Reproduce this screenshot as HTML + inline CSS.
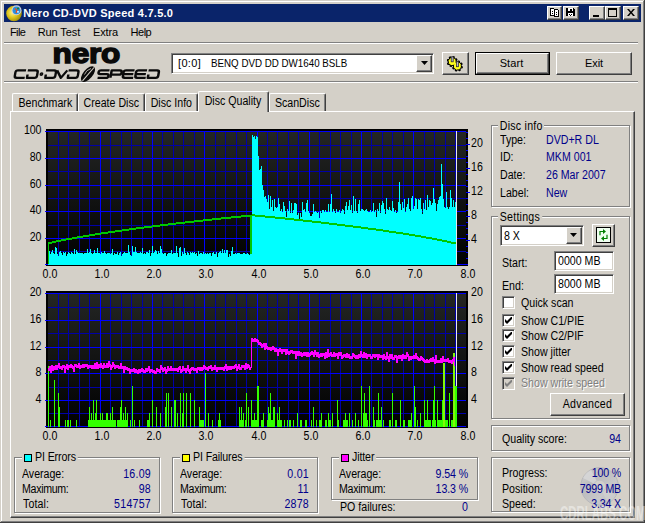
<!DOCTYPE html>
<html><head><meta charset="utf-8"><style>
html,body{margin:0;padding:0;}
body{width:645px;height:523px;overflow:hidden;background:#D4D0C8;position:relative;font-family:"Liberation Sans",sans-serif;font-size:11px;color:#000;}
.a{position:absolute;white-space:nowrap;line-height:14px;letter-spacing:-0.2px;}
.t{position:absolute;white-space:nowrap;line-height:14px;font-size:11px;}
.v{color:#00008B;}
.s{font-size:12px;line-height:15.34px;transform:scaleX(0.885);transform-origin:0 0;letter-spacing:0;}
.s.r{transform-origin:100% 0;}
.s.c{transform-origin:50% 0;}
.tab span{display:inline-block;font-size:12px;line-height:15.34px;transform:scaleX(0.885);transform-origin:50% 0;letter-spacing:0}
.r{text-align:right;}
.btn{position:absolute;box-sizing:border-box;background:#D4D0C8;border:1px solid;border-color:#fff #404040 #404040 #fff;box-shadow:inset -1px -1px 0 #808080, inset 1px 1px 0 #D4D0C8;}
.sunk{position:absolute;box-sizing:border-box;background:#fff;border:1px solid;border-color:#808080 #fff #fff #808080;box-shadow:inset 1px 1px 0 #404040, inset -1px -1px 0 #D4D0C8;}
.grp{position:absolute;box-sizing:border-box;border:1px solid #808080;box-shadow:1px 1px 0 #fff, inset 1px 1px 0 #fff;}
.gl{position:absolute;background:#D4D0C8;white-space:nowrap;line-height:14px;padding:0 2px;letter-spacing:-0.2px;}
.sw{position:absolute;width:6px;height:6px;border:1px solid #000;}
.hl{position:absolute;height:1px;}
.vl{position:absolute;width:1px;}
.cb{position:absolute;width:13px;height:13px;box-sizing:border-box;background:#fff;border:1px solid;border-color:#808080 #fff #fff #808080;box-shadow:inset 1px 1px 0 #404040, inset -1px -1px 0 #D4D0C8;}
.tab{position:absolute;box-sizing:border-box;border-top:1px solid #fff;border-left:1px solid #fff;border-right:1px solid #404040;border-radius:2px 2px 0 0;box-shadow:inset -1px 0 0 #808080;background:#D4D0C8;text-align:center;line-height:14px;}
</style></head><body><div class="hl" style="left:1px;top:1px;width:642px;background:#fff"></div>
<div class="vl" style="left:1px;top:1px;height:520px;background:#fff"></div>
<div class="vl" style="left:644px;top:0;height:523px;background:#404040"></div>
<div class="vl" style="left:643px;top:1px;height:521px;background:#808080"></div>
<div class="hl" style="left:0;top:522px;width:645px;background:#404040"></div>
<div class="hl" style="left:1px;top:521px;width:643px;background:#808080"></div>
<div class="a" style="left:4px;top:4px;width:637px;height:18px;background:#0A246A"></div>
<svg class="a" style="left:5px;top:4px" width="18" height="18" viewBox="0 0 18 18">
<defs><radialGradient id="gd" cx="0.4" cy="0.45" r="0.6"><stop offset="0" stop-color="#FFF490"/><stop offset="0.5" stop-color="#E0C820"/><stop offset="1" stop-color="#A08C08"/></radialGradient></defs>
<circle cx="9" cy="9.5" r="7.8" fill="url(#gd)"/>
<circle cx="11.5" cy="6.3" r="5" fill="#D0D0D8"/>
<circle cx="11.5" cy="6.3" r="3.9" fill="#2890E0"/>
<path d="M10 4.5 L12 6.5 L11 9" stroke="#E05020" stroke-width="1.3" fill="none"/>
<circle cx="13" cy="4.5" r="1" fill="#208020"/><circle cx="13" cy="7.8" r="0.9" fill="#fff"/>
</svg>
<div class="a" id="title" style="left:23.3px;top:6px;font-size:11px;font-weight:bold;color:#fff;letter-spacing:0.25px;">Nero CD-DVD Speed 4.7.5.0</div>
<div class="btn" style="left:547px;top:6px;width:15px;height:14px;"><svg style="position:absolute;left:-1px;top:-1px" width="16" height="14" shape-rendering="crispEdges"><rect x="3" y="2" width="5" height="8" fill="#000"/><rect x="4" y="3" width="3" height="6" fill="#fff"/><rect x="5" y="5" width="1" height="1" fill="#000"/><rect x="5" y="7" width="1" height="1" fill="#000"/><rect x="7" y="2" width="1" height="1" fill="#D4D0C8"/><rect x="7" y="3" width="5" height="8" fill="#000"/><rect x="8" y="4" width="3" height="6" fill="#fff"/><rect x="9" y="6" width="1" height="1" fill="#000"/><rect x="9" y="8" width="1" height="1" fill="#000"/><rect x="11" y="3" width="1" height="1" fill="#D4D0C8"/></svg></div>
<div class="btn" style="left:563px;top:6px;width:16px;height:14px;"><svg style="position:absolute;left:-1px;top:-1px" width="16" height="14" shape-rendering="crispEdges"><rect x="3" y="2" width="9" height="8" fill="#000"/><rect x="5" y="2" width="5" height="3" fill="#fff"/><rect x="7" y="3" width="2" height="2" fill="#000"/><rect x="5" y="7" width="5" height="3" fill="#fff"/><rect x="6" y="8" width="1" height="1" fill="#000"/><rect x="8" y="8" width="1" height="1" fill="#000"/><rect x="7" y="9" width="1" height="1" fill="#000"/><rect x="11" y="2" width="1" height="1" fill="#D4D0C8"/></svg></div>
<div class="btn" style="left:589px;top:6px;width:16px;height:14px;"><div style="position:absolute;left:3px;top:8px;width:6px;height:2px;background:#000"></div></div>
<div class="btn" style="left:605px;top:6px;width:16px;height:14px;"><div style="position:absolute;left:2px;top:1px;width:9px;height:9px;box-sizing:border-box;border:1px solid #000;border-top:2px solid #000"></div></div>
<div class="btn" style="left:623px;top:6px;width:16px;height:14px;"><svg style="position:absolute;left:3px;top:2px" width="8" height="7" viewBox="0 0 8 7"><path d="M0 0h2l2 2.5 2-2.5h2l-3 3.5 3 3.5h-2l-2-2.5-2 2.5h-2l3-3.5z" fill="#000"/></svg></div>
<div class="t menu" style="left:10px;top:25px;letter-spacing:-0.6px">File</div>
<div class="t menu" style="left:37.7px;top:25px;letter-spacing:-0.1px">Run Test</div>
<div class="t menu" style="left:93px;top:25px;letter-spacing:-0.12px">Extra</div>
<div class="t menu" style="left:130.6px;top:25px;letter-spacing:-0.5px">Help</div>
<div class="hl" style="left:4px;top:42px;width:634px;background:#808080"></div>
<div class="hl" style="left:4px;top:43px;width:634px;background:#fff"></div>
<div class="hl" style="left:4px;top:81px;width:634px;background:#808080"></div>
<div class="hl" style="left:4px;top:82px;width:634px;background:#fff"></div>
<svg class="a" style="left:0;top:0" width="170" height="84" viewBox="0 0 170 84">
<text x="52.6" y="62.8" font-family="Liberation Sans" font-weight="bold" font-size="28.5" textLength="67.6" lengthAdjust="spacingAndGlyphs" fill="#0a0a0a" stroke="#0a0a0a" stroke-width="1.5">nero</text>
<g transform="translate(13,0) skewX(-10)" fill="none" stroke="#0a0a0a" stroke-width="2.35" stroke-linejoin="round"><path transform="translate(15.2,70.3) scale(1.02,1)" d="M10,0 H2 Q0,0 0,2 V5.5 Q0,7.5 2,7.5 H10"/><path transform="translate(27.2,70.3) scale(1.02,1)" d="M0,0 H8 Q10,0 10,2 V5.5 Q10,7.5 8,7.5 H0.5 V4.2"/><path transform="translate(45.5,70.3) scale(1.02,1)" d="M0,0 H8 Q10,0 10,2 V5.5 Q10,7.5 8,7.5 H0.5 V4.2"/><path transform="translate(56.5,70.3) scale(1.02,1)" d="M0,0 L5,7.5 L10,0"/><path transform="translate(68,70.3) scale(1.02,1)" d="M0,0 H8 Q10,0 10,2 V5.5 Q10,7.5 8,7.5 H0.5 V4.2"/><path transform="translate(98.3,70.3) scale(1.06,1)" d="M10,0 H2 Q0,0 0,1.9 Q0,3.75 2,3.75 H8 Q10,3.75 10,5.6 Q10,7.5 8,7.5 H0"/><path transform="translate(110.8,70.3) scale(1.06,1)" d="M0.3,7.5 V0 H8 Q10,0 10,2.1 Q10,4.3 8,4.3 H0.5"/><path transform="translate(123.3,70.3) scale(1.06,1)" d="M10,0 H2 Q0,0 0,2 V5.5 Q0,7.5 2,7.5 H10 M1,3.75 H9.5"/><path transform="translate(135.8,70.3) scale(1.06,1)" d="M10,0 H2 Q0,0 0,2 V5.5 Q0,7.5 2,7.5 H10 M1,3.75 H9.5"/><path transform="translate(148.0,70.3) scale(1.06,1)" d="M0,0 H8 Q10,0 10,2 V5.5 Q10,7.5 8,7.5 H0.5 V4.2"/><circle cx="41.5" cy="74" r="0.7" fill="#111"/></g>
<ellipse cx="88" cy="74.1" rx="4.7" ry="9.4" transform="rotate(40 88 74.1)" fill="#0a0a0a"/>
<path d="M82.5 80.8 L94 67.5" stroke="#D4D0C8" stroke-width="1.1"/><path d="M84.5 74.5 Q86 70 91 68.5" stroke="#D4D0C8" stroke-width="0.8" fill="none"/>
</svg>
<div class="sunk" style="left:171px;top:53px;width:263px;height:21px;"></div>
<div class="t" style="left:178px;top:56px;letter-spacing:0.35px;">[0:0]</div>
<div class="t" id="drive" style="left:210.5px;top:56px;transform-origin:0 0;transform:scaleX(0.888)">BENQ DVD DD DW1640 BSLB</div>
<div class="btn" style="left:416px;top:55px;width:16px;height:17px;"><svg style="position:absolute;left:4px;top:5px" width="7" height="4"><path d="M0 0h7l-3.5 4z" fill="#000"/></svg></div>
<div class="btn" style="left:442px;top:52px;width:27px;height:23px;"><svg style="position:absolute;left:4px;top:3px" width="18" height="17" viewBox="0 0 18 17">
<g fill="#F4F400" stroke="#000" stroke-width="1.3" stroke-linejoin="round"><path d="M10.10 6.59 L9.81 7.53 L8.10 7.56 L7.67 8.08 L7.96 9.77 L7.10 10.23 L5.87 9.04 L5.19 9.10 L4.21 10.50 L3.27 10.21 L3.24 8.50 L2.72 8.07 L1.03 8.36 L0.57 7.50 L1.76 6.27 L1.70 5.59 L0.30 4.61 L0.59 3.67 L2.30 3.64 L2.73 3.12 L2.44 1.43 L3.30 0.97 L4.53 2.16 L5.21 2.10 L6.19 0.70 L7.13 0.99 L7.16 2.70 L7.68 3.13 L9.37 2.84 L9.83 3.70 L8.64 4.93 L8.70 5.61Z"/><path d="M15.30 10.99 L15.01 11.93 L13.30 11.96 L12.87 12.48 L13.16 14.17 L12.30 14.63 L11.07 13.44 L10.39 13.50 L9.41 14.90 L8.47 14.61 L8.44 12.90 L7.92 12.47 L6.23 12.76 L5.77 11.90 L6.96 10.67 L6.90 9.99 L5.50 9.01 L5.79 8.07 L7.50 8.04 L7.93 7.52 L7.64 5.83 L8.50 5.37 L9.73 6.56 L10.41 6.50 L11.39 5.10 L12.33 5.39 L12.36 7.10 L12.88 7.53 L14.57 7.24 L15.03 8.10 L13.84 9.33 L13.90 10.01Z"/></g>
<g fill="#FFFF20"><circle cx="5.2" cy="5.6" r="3.4"/><circle cx="10.4" cy="10" r="3.4"/></g>
<rect x="4.2" y="0.8" width="2" height="5" fill="#B8B8D0" stroke="#303030" stroke-width="0.8"/>
<rect x="9.4" y="5.7" width="2" height="5" fill="#B8B8D0" stroke="#303030" stroke-width="0.8"/>
</svg></div>
<div class="a" style="left:475px;top:52px;width:75px;height:23px;background:#000"></div>
<div class="btn" style="left:476px;top:53px;width:73px;height:21px;"></div>
<div class="t" style="left:474px;top:56px;width:75px;text-align:center;letter-spacing:0.1px">Start</div>
<div class="btn" style="left:556px;top:52px;width:76px;height:23px;"></div>
<div class="t" style="left:556px;top:56px;width:76px;text-align:center;letter-spacing:-0.1px">Exit</div>
<div class="a" style="left:10px;top:111px;width:625px;height:407px;box-sizing:border-box;border:1px solid;border-color:#fff #404040 #404040 #fff;box-shadow:inset -1px -1px 0 #808080;"></div>
<div class="tab" style="left:12px;top:93px;width:66px;height:18px;padding-top:2.3px;"><span>Benchmark</span></div>
<div class="tab" style="left:78px;top:93px;width:67px;height:18px;padding-top:2.3px;"><span>Create Disc</span></div>
<div class="tab" style="left:145px;top:93px;width:53px;height:18px;padding-top:2.3px;"><span>Disc Info</span></div>
<div class="tab" style="left:198px;top:91px;width:71px;height:21px;padding-top:2.3px;"><span>Disc Quality</span></div>
<div class="tab" style="left:269px;top:93px;width:57px;height:18px;padding-top:2.3px;"><span>ScanDisc</span></div>
<svg class="a" style="left:0;top:0" width="645" height="523" viewBox="0 0 645 523" shape-rendering="crispEdges"><defs><linearGradient id="cg" x1="0" y1="0" x2="0" y2="1"><stop offset="0" stop-color="#242624"/><stop offset="1" stop-color="#000000"/></linearGradient></defs>
<rect x="46" y="129" width="422" height="137" fill="#000" />
<rect x="48" y="131" width="418" height="134" fill="url(#cg)" />
<rect x="58" y="131" width="1" height="134" fill="#0000A8" />
<rect x="68" y="131" width="1" height="134" fill="#0000A8" />
<rect x="79" y="131" width="1" height="134" fill="#0000A8" />
<rect x="89" y="131" width="1" height="134" fill="#0000A8" />
<rect x="100" y="131" width="1" height="134" fill="#0000FF" />
<rect x="110" y="131" width="1" height="134" fill="#0000A8" />
<rect x="121" y="131" width="1" height="134" fill="#0000A8" />
<rect x="131" y="131" width="1" height="134" fill="#0000A8" />
<rect x="142" y="131" width="1" height="134" fill="#0000A8" />
<rect x="152" y="131" width="1" height="134" fill="#0000FF" />
<rect x="162" y="131" width="1" height="134" fill="#0000A8" />
<rect x="173" y="131" width="1" height="134" fill="#0000A8" />
<rect x="183" y="131" width="1" height="134" fill="#0000A8" />
<rect x="194" y="131" width="1" height="134" fill="#0000A8" />
<rect x="204" y="131" width="1" height="134" fill="#0000FF" />
<rect x="215" y="131" width="1" height="134" fill="#0000A8" />
<rect x="225" y="131" width="1" height="134" fill="#0000A8" />
<rect x="236" y="131" width="1" height="134" fill="#0000A8" />
<rect x="246" y="131" width="1" height="134" fill="#0000A8" />
<rect x="257" y="131" width="1" height="134" fill="#0000FF" />
<rect x="267" y="131" width="1" height="134" fill="#0000A8" />
<rect x="277" y="131" width="1" height="134" fill="#0000A8" />
<rect x="288" y="131" width="1" height="134" fill="#0000A8" />
<rect x="298" y="131" width="1" height="134" fill="#0000A8" />
<rect x="309" y="131" width="1" height="134" fill="#0000FF" />
<rect x="319" y="131" width="1" height="134" fill="#0000A8" />
<rect x="330" y="131" width="1" height="134" fill="#0000A8" />
<rect x="340" y="131" width="1" height="134" fill="#0000A8" />
<rect x="351" y="131" width="1" height="134" fill="#0000A8" />
<rect x="361" y="131" width="1" height="134" fill="#0000FF" />
<rect x="371" y="131" width="1" height="134" fill="#0000A8" />
<rect x="382" y="131" width="1" height="134" fill="#0000A8" />
<rect x="392" y="131" width="1" height="134" fill="#0000A8" />
<rect x="403" y="131" width="1" height="134" fill="#0000A8" />
<rect x="413" y="131" width="1" height="134" fill="#0000FF" />
<rect x="424" y="131" width="1" height="134" fill="#0000A8" />
<rect x="434" y="131" width="1" height="134" fill="#0000A8" />
<rect x="445" y="131" width="1" height="134" fill="#0000A8" />
<rect x="455" y="131" width="1" height="134" fill="#0000A8" />
<rect x="45" y="131" width="421" height="1" fill="#0000FF" />
<rect x="48" y="145" width="418" height="1" fill="#0000A8" />
<rect x="45" y="158" width="421" height="1" fill="#0000FF" />
<rect x="48" y="171" width="418" height="1" fill="#0000A8" />
<rect x="45" y="185" width="421" height="1" fill="#0000FF" />
<rect x="48" y="198" width="418" height="1" fill="#0000A8" />
<rect x="45" y="211" width="421" height="1" fill="#0000FF" />
<rect x="48" y="225" width="418" height="1" fill="#0000A8" />
<rect x="45" y="238" width="421" height="1" fill="#0000FF" />
<rect x="48" y="251" width="418" height="1" fill="#0000A8" />
<rect x="45" y="264" width="421" height="1" fill="#0000FF" />
<rect x="100" y="131" width="1" height="134" fill="#0000FF" />
<rect x="152" y="131" width="1" height="134" fill="#0000FF" />
<rect x="204" y="131" width="1" height="134" fill="#0000FF" />
<rect x="257" y="131" width="1" height="134" fill="#0000FF" />
<rect x="309" y="131" width="1" height="134" fill="#0000FF" />
<rect x="361" y="131" width="1" height="134" fill="#0000FF" />
<rect x="413" y="131" width="1" height="134" fill="#0000FF" />
<rect x="46" y="291" width="422" height="137" fill="#000" />
<rect x="48" y="293" width="418" height="134" fill="url(#cg)" />
<rect x="58" y="293" width="1" height="134" fill="#0000A8" />
<rect x="68" y="293" width="1" height="134" fill="#0000A8" />
<rect x="79" y="293" width="1" height="134" fill="#0000A8" />
<rect x="89" y="293" width="1" height="134" fill="#0000A8" />
<rect x="100" y="293" width="1" height="134" fill="#0000FF" />
<rect x="110" y="293" width="1" height="134" fill="#0000A8" />
<rect x="121" y="293" width="1" height="134" fill="#0000A8" />
<rect x="131" y="293" width="1" height="134" fill="#0000A8" />
<rect x="142" y="293" width="1" height="134" fill="#0000A8" />
<rect x="152" y="293" width="1" height="134" fill="#0000FF" />
<rect x="162" y="293" width="1" height="134" fill="#0000A8" />
<rect x="173" y="293" width="1" height="134" fill="#0000A8" />
<rect x="183" y="293" width="1" height="134" fill="#0000A8" />
<rect x="194" y="293" width="1" height="134" fill="#0000A8" />
<rect x="204" y="293" width="1" height="134" fill="#0000FF" />
<rect x="215" y="293" width="1" height="134" fill="#0000A8" />
<rect x="225" y="293" width="1" height="134" fill="#0000A8" />
<rect x="236" y="293" width="1" height="134" fill="#0000A8" />
<rect x="246" y="293" width="1" height="134" fill="#0000A8" />
<rect x="257" y="293" width="1" height="134" fill="#0000FF" />
<rect x="267" y="293" width="1" height="134" fill="#0000A8" />
<rect x="277" y="293" width="1" height="134" fill="#0000A8" />
<rect x="288" y="293" width="1" height="134" fill="#0000A8" />
<rect x="298" y="293" width="1" height="134" fill="#0000A8" />
<rect x="309" y="293" width="1" height="134" fill="#0000FF" />
<rect x="319" y="293" width="1" height="134" fill="#0000A8" />
<rect x="330" y="293" width="1" height="134" fill="#0000A8" />
<rect x="340" y="293" width="1" height="134" fill="#0000A8" />
<rect x="351" y="293" width="1" height="134" fill="#0000A8" />
<rect x="361" y="293" width="1" height="134" fill="#0000FF" />
<rect x="371" y="293" width="1" height="134" fill="#0000A8" />
<rect x="382" y="293" width="1" height="134" fill="#0000A8" />
<rect x="392" y="293" width="1" height="134" fill="#0000A8" />
<rect x="403" y="293" width="1" height="134" fill="#0000A8" />
<rect x="413" y="293" width="1" height="134" fill="#0000FF" />
<rect x="424" y="293" width="1" height="134" fill="#0000A8" />
<rect x="434" y="293" width="1" height="134" fill="#0000A8" />
<rect x="445" y="293" width="1" height="134" fill="#0000A8" />
<rect x="455" y="293" width="1" height="134" fill="#0000A8" />
<rect x="45" y="293" width="421" height="1" fill="#0000FF" />
<rect x="48" y="307" width="418" height="1" fill="#0000A8" />
<rect x="45" y="320" width="421" height="1" fill="#0000FF" />
<rect x="48" y="333" width="418" height="1" fill="#0000A8" />
<rect x="45" y="347" width="421" height="1" fill="#0000FF" />
<rect x="48" y="360" width="418" height="1" fill="#0000A8" />
<rect x="45" y="373" width="421" height="1" fill="#0000FF" />
<rect x="48" y="387" width="418" height="1" fill="#0000A8" />
<rect x="45" y="400" width="421" height="1" fill="#0000FF" />
<rect x="48" y="413" width="418" height="1" fill="#0000A8" />
<rect x="45" y="426" width="421" height="1" fill="#0000FF" />
<rect x="100" y="293" width="1" height="134" fill="#0000FF" />
<rect x="152" y="293" width="1" height="134" fill="#0000FF" />
<rect x="204" y="293" width="1" height="134" fill="#0000FF" />
<rect x="257" y="293" width="1" height="134" fill="#0000FF" />
<rect x="309" y="293" width="1" height="134" fill="#0000FF" />
<rect x="361" y="293" width="1" height="134" fill="#0000FF" />
<rect x="413" y="293" width="1" height="134" fill="#0000FF" />
<path d="M48 265V250h1V251h1V254h1V252h1V250h1V253h1V254h1V247h1V248h1V254h1V256h1V252h1V251h1V253h1V255h1V252h1V253h1V252h1V256h1V254h1V252h1V253h1V254h1V252h1V253h1V254h1V249h1V254h1V250h1V252h1V253h1V253h1V253h1V253h1V253h1V254h1V253h1V253h1V253h1V249h1V253h1V252h1V249h1V253h1V254h1V253h1V250h1V253h1V253h1V248h1V253h1V253h1V254h1V252h1V253h1V253h1V251h1V253h1V254h1V253h1V253h1V253h1V254h1V253h1V249h1V255h1V253h1V254h1V254h1V252h1V255h1V253h1V252h1V256h1V254h1V253h1V252h1V253h1V253h1V253h1V245h1V252h1V255h1V256h1V246h1V252h1V252h1V247h1V252h1V253h1V253h1V253h1V252h1V253h1V248h1V254h1V253h1V254h1V252h1V252h1V253h1V250h1V256h1V253h1V246h1V253h1V252h1V250h1V251h1V254h1V251h1V253h1V246h1V249h1V253h1V254h1V253h1V253h1V256h1V254h1V253h1V253h1V253h1V250h1V254h1V253h1V253h1V253h1V246h1V253h1V257h1V248h1V247h1V256h1V252h1V254h1V248h1V253h1V255h1V252h1V253h1V255h1V252h1V253h1V252h1V253h1V252h1V254h1V253h1V256h1V251h1V254h1V253h1V253h1V254h1V252h1V254h1V253h1V254h1V253h1V254h1V253h1V253h1V256h1V253h1V252h1V254h1V254h1V252h1V257h1V253h1V252h1V251h1V253h1V249h1V253h1V250h1V253h1V250h1V250h1V257h1V254h1V256h1V251h1V247h1V254h1V254h1V253h1V254h1V253h1V253h1V253h1V254h1V254h1V254h1V253h1V253h1V254h1V254h1V253h1V254h1V255h1V248h1V254h1V135h1V137h1V136h1V139h1V136h1V137h1V156h1V170h1V169h1V166h1V185h1V190h1V197h1V196h1V199h1V202h1V195h1V209h1V196h1V207h1V200h1V211h1V199h1V207h1V208h1V207h1V198h1V204h1V211h1V209h1V212h1V202h1V206h1V211h1V217h1V209h1V211h1V201h1V213h1V203h1V213h1V210h1V203h1V203h1V204h1V215h1V213h1V219h1V213h1V217h1V202h1V210h1V209h1V212h1V203h1V200h1V211h1V213h1V216h1V216h1V214h1V204h1V212h1V211h1V212h1V213h1V212h1V218h1V211h1V213h1V210h1V210h1V212h1V210h1V212h1V212h1V204h1V212h1V204h1V194h1V212h1V209h1V211h1V213h1V209h1V212h1V212h1V210h1V213h1V211h1V209h1V210h1V214h1V206h1V202h1V210h1V206h1V200h1V210h1V205h1V213h1V196h1V211h1V199h1V211h1V213h1V204h1V200h1V211h1V209h1V209h1V210h1V211h1V210h1V209h1V211h1V212h1V212h1V210h1V212h1V211h1V203h1V212h1V210h1V217h1V209h1V211h1V203h1V213h1V205h1V201h1V203h1V209h1V214h1V198h1V209h1V210h1V207h1V210h1V211h1V201h1V208h1V212h1V210h1V213h1V212h1V202h1V182h1V204h1V210h1V202h1V208h1V199h1V212h1V207h1V204h1V198h1V209h1V211h1V198h1V196h1V209h1V206h1V198h1V199h1V209h1V199h1V200h1V198h1V209h1V214h1V203h1V209h1V200h1V210h1V195h1V207h1V200h1V201h1V205h1V203h1V188h1V199h1V203h1V211h1V204h1V200h1V197h1V196h1V164h1V184h1V199h1V207h1V208h1V192h1V207h1V209h1V207h1V190h1V198h1V207h1V200h1V207h1V202h1V265Z" fill="#00FFFF"/>
<path d="M48 243h1v21h-1zM48 242h1v2h-1zM49 242h1v2h-1zM50 242h1v2h-1zM51 242h1v2h-1zM52 241h1v2h-1zM53 241h1v2h-1zM54 241h1v2h-1zM55 241h1v2h-1zM56 240h1v2h-1zM57 240h1v2h-1zM58 240h1v2h-1zM59 240h1v2h-1zM60 240h1v2h-1zM61 239h1v2h-1zM62 239h1v2h-1zM63 239h1v2h-1zM64 239h1v2h-1zM65 239h1v2h-1zM66 238h1v2h-1zM67 238h1v2h-1zM68 238h1v2h-1zM69 238h1v2h-1zM70 238h1v2h-1zM71 238h1v2h-1zM72 237h1v2h-1zM73 237h1v2h-1zM74 237h1v2h-1zM75 237h1v2h-1zM76 237h1v2h-1zM77 236h1v2h-1zM78 236h1v2h-1zM79 236h1v2h-1zM80 236h1v2h-1zM81 236h1v2h-1zM82 236h1v2h-1zM83 235h1v2h-1zM84 235h1v2h-1zM85 235h1v2h-1zM86 235h1v2h-1zM87 235h1v2h-1zM88 235h1v2h-1zM89 234h1v2h-1zM90 234h1v2h-1zM91 234h1v2h-1zM92 234h1v2h-1zM93 234h1v2h-1zM94 234h1v2h-1zM95 233h1v2h-1zM96 233h1v2h-1zM97 233h1v2h-1zM98 233h1v2h-1zM99 233h1v2h-1zM100 233h1v2h-1zM101 232h1v2h-1zM102 232h1v2h-1zM103 232h1v2h-1zM104 232h1v2h-1zM105 232h1v2h-1zM106 232h1v2h-1zM107 232h1v2h-1zM108 231h1v2h-1zM109 231h1v2h-1zM110 231h1v2h-1zM111 231h1v2h-1zM112 231h1v2h-1zM113 231h1v2h-1zM114 231h1v2h-1zM115 230h1v2h-1zM116 230h1v2h-1zM117 230h1v2h-1zM118 230h1v2h-1zM119 230h1v2h-1zM120 230h1v2h-1zM121 230h1v2h-1zM122 229h1v2h-1zM123 229h1v2h-1zM124 229h1v2h-1zM125 229h1v2h-1zM126 229h1v2h-1zM127 229h1v2h-1zM128 229h1v2h-1zM129 228h1v2h-1zM130 228h1v2h-1zM131 228h1v2h-1zM132 228h1v2h-1zM133 228h1v2h-1zM134 228h1v2h-1zM135 228h1v2h-1zM136 227h1v2h-1zM137 227h1v2h-1zM138 227h1v2h-1zM139 227h1v2h-1zM140 227h1v2h-1zM141 227h1v2h-1zM142 227h1v2h-1zM143 227h1v2h-1zM144 226h1v2h-1zM145 226h1v2h-1zM146 226h1v2h-1zM147 226h1v2h-1zM148 226h1v2h-1zM149 226h1v2h-1zM150 226h1v2h-1zM151 226h1v2h-1zM152 225h1v2h-1zM153 225h1v2h-1zM154 225h1v2h-1zM155 225h1v2h-1zM156 225h1v2h-1zM157 225h1v2h-1zM158 225h1v2h-1zM159 225h1v2h-1zM160 224h1v2h-1zM161 224h1v2h-1zM162 224h1v2h-1zM163 224h1v2h-1zM164 224h1v2h-1zM165 224h1v2h-1zM166 224h1v2h-1zM167 224h1v2h-1zM168 223h1v2h-1zM169 223h1v2h-1zM170 223h1v2h-1zM171 223h1v2h-1zM172 223h1v2h-1zM173 223h1v2h-1zM174 223h1v2h-1zM175 223h1v2h-1zM176 222h1v2h-1zM177 222h1v2h-1zM178 222h1v2h-1zM179 222h1v2h-1zM180 222h1v2h-1zM181 222h1v2h-1zM182 222h1v2h-1zM183 222h1v2h-1zM184 222h1v2h-1zM185 221h1v2h-1zM186 221h1v2h-1zM187 221h1v2h-1zM188 221h1v2h-1zM189 221h1v2h-1zM190 221h1v2h-1zM191 221h1v2h-1zM192 221h1v2h-1zM193 221h1v2h-1zM194 220h1v2h-1zM195 220h1v2h-1zM196 220h1v2h-1zM197 220h1v2h-1zM198 220h1v2h-1zM199 220h1v2h-1zM200 220h1v2h-1zM201 220h1v2h-1zM202 220h1v2h-1zM203 219h1v2h-1zM204 219h1v2h-1zM205 219h1v2h-1zM206 219h1v2h-1zM207 219h1v2h-1zM208 219h1v2h-1zM209 219h1v2h-1zM210 219h1v2h-1zM211 219h1v2h-1zM212 218h1v2h-1zM213 218h1v2h-1zM214 218h1v2h-1zM215 218h1v2h-1zM216 218h1v2h-1zM217 218h1v2h-1zM218 218h1v2h-1zM219 218h1v2h-1zM220 218h1v2h-1zM221 217h1v2h-1zM222 217h1v2h-1zM223 217h1v2h-1zM224 217h1v2h-1zM225 217h1v2h-1zM226 217h1v2h-1zM227 217h1v2h-1zM228 217h1v2h-1zM229 217h1v2h-1zM230 217h1v2h-1zM231 216h1v2h-1zM232 216h1v2h-1zM233 216h1v2h-1zM234 216h1v2h-1zM235 216h1v2h-1zM236 216h1v2h-1zM237 216h1v2h-1zM238 216h1v2h-1zM239 216h1v2h-1zM240 216h1v2h-1zM241 215h1v2h-1zM242 215h1v2h-1zM243 215h1v2h-1zM244 215h1v2h-1zM245 215h1v2h-1zM246 215h1v2h-1zM247 215h1v2h-1zM248 215h1v2h-1zM249 215h1v2h-1zM250 215h1v2h-1zM250 215h2v39h-2zM252 214h1v2h-1zM253 214h1v2h-1zM254 214h1v2h-1zM255 215h1v2h-1zM256 215h1v2h-1zM257 215h1v2h-1zM258 215h1v2h-1zM259 215h1v2h-1zM260 215h1v2h-1zM261 215h1v2h-1zM262 215h1v2h-1zM263 215h1v2h-1zM264 215h1v2h-1zM265 216h1v2h-1zM266 216h1v2h-1zM267 216h1v2h-1zM268 216h1v2h-1zM269 216h1v2h-1zM270 216h1v2h-1zM271 216h1v2h-1zM272 216h1v2h-1zM273 216h1v2h-1zM274 216h1v2h-1zM275 217h1v2h-1zM276 217h1v2h-1zM277 217h1v2h-1zM278 217h1v2h-1zM279 217h1v2h-1zM280 217h1v2h-1zM281 217h1v2h-1zM282 217h1v2h-1zM283 217h1v2h-1zM284 217h1v2h-1zM285 218h1v2h-1zM286 218h1v2h-1zM287 218h1v2h-1zM288 218h1v2h-1zM289 218h1v2h-1zM290 218h1v2h-1zM291 218h1v2h-1zM292 218h1v2h-1zM293 218h1v2h-1zM294 219h1v2h-1zM295 219h1v2h-1zM296 219h1v2h-1zM297 219h1v2h-1zM298 219h1v2h-1zM299 219h1v2h-1zM300 219h1v2h-1zM301 219h1v2h-1zM302 219h1v2h-1zM303 220h1v2h-1zM304 220h1v2h-1zM305 220h1v2h-1zM306 220h1v2h-1zM307 220h1v2h-1zM308 220h1v2h-1zM309 220h1v2h-1zM310 220h1v2h-1zM311 220h1v2h-1zM312 221h1v2h-1zM313 221h1v2h-1zM314 221h1v2h-1zM315 221h1v2h-1zM316 221h1v2h-1zM317 221h1v2h-1zM318 221h1v2h-1zM319 221h1v2h-1zM320 221h1v2h-1zM321 222h1v2h-1zM322 222h1v2h-1zM323 222h1v2h-1zM324 222h1v2h-1zM325 222h1v2h-1zM326 222h1v2h-1zM327 222h1v2h-1zM328 222h1v2h-1zM329 223h1v2h-1zM330 223h1v2h-1zM331 223h1v2h-1zM332 223h1v2h-1zM333 223h1v2h-1zM334 223h1v2h-1zM335 223h1v2h-1zM336 223h1v2h-1zM337 224h1v2h-1zM338 224h1v2h-1zM339 224h1v2h-1zM340 224h1v2h-1zM341 224h1v2h-1zM342 224h1v2h-1zM343 224h1v2h-1zM344 224h1v2h-1zM345 225h1v2h-1zM346 225h1v2h-1zM347 225h1v2h-1zM348 225h1v2h-1zM349 225h1v2h-1zM350 225h1v2h-1zM351 225h1v2h-1zM352 225h1v2h-1zM353 226h1v2h-1zM354 226h1v2h-1zM355 226h1v2h-1zM356 226h1v2h-1zM357 226h1v2h-1zM358 226h1v2h-1zM359 226h1v2h-1zM360 226h1v2h-1zM361 227h1v2h-1zM362 227h1v2h-1zM363 227h1v2h-1zM364 227h1v2h-1zM365 227h1v2h-1zM366 227h1v2h-1zM367 227h1v2h-1zM368 228h1v2h-1zM369 228h1v2h-1zM370 228h1v2h-1zM371 228h1v2h-1zM372 228h1v2h-1zM373 228h1v2h-1zM374 228h1v2h-1zM375 228h1v2h-1zM376 229h1v2h-1zM377 229h1v2h-1zM378 229h1v2h-1zM379 229h1v2h-1zM380 229h1v2h-1zM381 229h1v2h-1zM382 229h1v2h-1zM383 230h1v2h-1zM384 230h1v2h-1zM385 230h1v2h-1zM386 230h1v2h-1zM387 230h1v2h-1zM388 230h1v2h-1zM389 231h1v2h-1zM390 231h1v2h-1zM391 231h1v2h-1zM392 231h1v2h-1zM393 231h1v2h-1zM394 231h1v2h-1zM395 231h1v2h-1zM396 232h1v2h-1zM397 232h1v2h-1zM398 232h1v2h-1zM399 232h1v2h-1zM400 232h1v2h-1zM401 232h1v2h-1zM402 232h1v2h-1zM403 233h1v2h-1zM404 233h1v2h-1zM405 233h1v2h-1zM406 233h1v2h-1zM407 233h1v2h-1zM408 233h1v2h-1zM409 234h1v2h-1zM410 234h1v2h-1zM411 234h1v2h-1zM412 234h1v2h-1zM413 234h1v2h-1zM414 234h1v2h-1zM415 235h1v2h-1zM416 235h1v2h-1zM417 235h1v2h-1zM418 235h1v2h-1zM419 235h1v2h-1zM420 235h1v2h-1zM421 236h1v2h-1zM422 236h1v2h-1zM423 236h1v2h-1zM424 236h1v2h-1zM425 236h1v2h-1zM426 237h1v2h-1zM427 237h1v2h-1zM428 237h1v2h-1zM429 237h1v2h-1zM430 237h1v2h-1zM431 237h1v2h-1zM432 238h1v2h-1zM433 238h1v2h-1zM434 238h1v2h-1zM435 238h1v2h-1zM436 238h1v2h-1zM437 239h1v2h-1zM438 239h1v2h-1zM439 239h1v2h-1zM440 239h1v2h-1zM441 239h1v2h-1zM442 240h1v2h-1zM443 240h1v2h-1zM444 240h1v2h-1zM445 240h1v2h-1zM446 240h1v2h-1zM447 241h1v2h-1zM448 241h1v2h-1zM449 241h1v2h-1zM450 241h1v2h-1zM451 242h1v2h-1zM452 242h1v2h-1zM453 242h1v2h-1zM454 242h1v2h-1zM455 242h1v2h-1z" fill="#00C800"/>
<rect x="466" y="264" width="2" height="1" fill="#0000FF" />
<rect x="466" y="258" width="2" height="1" fill="#0000FF" />
<rect x="466" y="252" width="2" height="1" fill="#0000FF" />
<rect x="466" y="246" width="2" height="1" fill="#0000FF" />
<rect x="466" y="240" width="4" height="1" fill="#0000FF" />
<rect x="466" y="234" width="2" height="1" fill="#0000FF" />
<rect x="466" y="228" width="2" height="1" fill="#0000FF" />
<rect x="466" y="222" width="2" height="1" fill="#0000FF" />
<rect x="466" y="216" width="4" height="1" fill="#0000FF" />
<rect x="466" y="210" width="2" height="1" fill="#0000FF" />
<rect x="466" y="204" width="2" height="1" fill="#0000FF" />
<rect x="466" y="198" width="2" height="1" fill="#0000FF" />
<rect x="466" y="192" width="4" height="1" fill="#0000FF" />
<rect x="466" y="186" width="2" height="1" fill="#0000FF" />
<rect x="466" y="180" width="2" height="1" fill="#0000FF" />
<rect x="466" y="174" width="2" height="1" fill="#0000FF" />
<rect x="466" y="168" width="4" height="1" fill="#0000FF" />
<rect x="466" y="162" width="2" height="1" fill="#0000FF" />
<rect x="466" y="156" width="2" height="1" fill="#0000FF" />
<rect x="466" y="150" width="2" height="1" fill="#0000FF" />
<rect x="466" y="144" width="4" height="1" fill="#0000FF" />
<rect x="466" y="138" width="2" height="1" fill="#0000FF" />
<rect x="466" y="132" width="2" height="1" fill="#0000FF" />
<rect x="456" y="131" width="1" height="133.5" fill="#E8E8E8" />
<rect x="456" y="293" width="1" height="133.5" fill="#E8E8E8" />
<rect x="48" y="366.4" width="1" height="60.6" fill="#33FF00"/>
<rect x="50" y="419.8" width="1" height="7.2" fill="#33FF00"/>
<rect x="54" y="379.8" width="1" height="47.2" fill="#33FF00"/>
<rect x="58" y="393.1" width="1" height="33.9" fill="#33FF00"/>
<rect x="59" y="406.5" width="1" height="20.5" fill="#33FF00"/>
<rect x="65" y="419.8" width="1" height="7.2" fill="#33FF00"/>
<rect x="67" y="419.8" width="1" height="7.2" fill="#33FF00"/>
<rect x="68" y="419.8" width="1" height="7.2" fill="#33FF00"/>
<rect x="70" y="419.8" width="1" height="7.2" fill="#33FF00"/>
<rect x="76" y="419.8" width="1" height="7.2" fill="#33FF00"/>
<rect x="88" y="419.8" width="1" height="7.2" fill="#33FF00"/>
<rect x="89" y="406.5" width="1" height="20.5" fill="#33FF00"/>
<rect x="90" y="419.8" width="1" height="7.2" fill="#33FF00"/>
<rect x="91" y="413.1" width="1" height="13.8" fill="#33FF00"/>
<rect x="92" y="419.8" width="1" height="7.2" fill="#33FF00"/>
<rect x="93" y="399.8" width="1" height="27.2" fill="#33FF00"/>
<rect x="94" y="419.8" width="1" height="7.2" fill="#33FF00"/>
<rect x="95" y="413.1" width="1" height="13.8" fill="#33FF00"/>
<rect x="96" y="399.8" width="1" height="27.2" fill="#33FF00"/>
<rect x="97" y="419.8" width="1" height="7.2" fill="#33FF00"/>
<rect x="98" y="419.8" width="1" height="7.2" fill="#33FF00"/>
<rect x="99" y="419.8" width="1" height="7.2" fill="#33FF00"/>
<rect x="100" y="413.1" width="1" height="13.8" fill="#33FF00"/>
<rect x="101" y="419.8" width="1" height="7.2" fill="#33FF00"/>
<rect x="102" y="413.1" width="1" height="13.8" fill="#33FF00"/>
<rect x="103" y="419.8" width="1" height="7.2" fill="#33FF00"/>
<rect x="104" y="419.8" width="1" height="7.2" fill="#33FF00"/>
<rect x="105" y="419.8" width="1" height="7.2" fill="#33FF00"/>
<rect x="106" y="413.1" width="1" height="13.8" fill="#33FF00"/>
<rect x="107" y="413.1" width="1" height="13.8" fill="#33FF00"/>
<rect x="108" y="419.8" width="1" height="7.2" fill="#33FF00"/>
<rect x="109" y="419.8" width="1" height="7.2" fill="#33FF00"/>
<rect x="110" y="413.1" width="1" height="13.8" fill="#33FF00"/>
<rect x="111" y="419.8" width="1" height="7.2" fill="#33FF00"/>
<rect x="112" y="406.5" width="1" height="20.5" fill="#33FF00"/>
<rect x="113" y="419.8" width="1" height="7.2" fill="#33FF00"/>
<rect x="114" y="419.8" width="1" height="7.2" fill="#33FF00"/>
<rect x="115" y="419.8" width="1" height="7.2" fill="#33FF00"/>
<rect x="117" y="419.8" width="1" height="7.2" fill="#33FF00"/>
<rect x="118" y="419.8" width="1" height="7.2" fill="#33FF00"/>
<rect x="119" y="419.8" width="1" height="7.2" fill="#33FF00"/>
<rect x="120" y="406.5" width="1" height="20.5" fill="#33FF00"/>
<rect x="121" y="399.8" width="1" height="27.2" fill="#33FF00"/>
<rect x="122" y="419.8" width="1" height="7.2" fill="#33FF00"/>
<rect x="123" y="413.1" width="1" height="13.8" fill="#33FF00"/>
<rect x="124" y="419.8" width="1" height="7.2" fill="#33FF00"/>
<rect x="125" y="406.5" width="1" height="20.5" fill="#33FF00"/>
<rect x="126" y="419.8" width="1" height="7.2" fill="#33FF00"/>
<rect x="127" y="413.1" width="1" height="13.8" fill="#33FF00"/>
<rect x="130" y="419.8" width="1" height="7.2" fill="#33FF00"/>
<rect x="132" y="386.4" width="1" height="40.5" fill="#33FF00"/>
<rect x="134" y="419.8" width="1" height="7.2" fill="#33FF00"/>
<rect x="139" y="419.8" width="1" height="7.2" fill="#33FF00"/>
<rect x="147" y="419.8" width="1" height="7.2" fill="#33FF00"/>
<rect x="148" y="419.8" width="1" height="7.2" fill="#33FF00"/>
<rect x="149" y="413.1" width="1" height="13.8" fill="#33FF00"/>
<rect x="152" y="399.8" width="1" height="27.2" fill="#33FF00"/>
<rect x="156" y="406.5" width="1" height="20.5" fill="#33FF00"/>
<rect x="160" y="413.1" width="1" height="13.8" fill="#33FF00"/>
<rect x="165" y="406.5" width="1" height="20.5" fill="#33FF00"/>
<rect x="166" y="393.1" width="1" height="33.9" fill="#33FF00"/>
<rect x="168" y="393.1" width="1" height="33.9" fill="#33FF00"/>
<rect x="171" y="406.5" width="1" height="20.5" fill="#33FF00"/>
<rect x="174" y="399.8" width="1" height="27.2" fill="#33FF00"/>
<rect x="175" y="399.8" width="1" height="27.2" fill="#33FF00"/>
<rect x="177" y="413.1" width="1" height="13.8" fill="#33FF00"/>
<rect x="180" y="393.1" width="1" height="33.9" fill="#33FF00"/>
<rect x="182" y="413.1" width="1" height="13.8" fill="#33FF00"/>
<rect x="183" y="393.1" width="1" height="33.9" fill="#33FF00"/>
<rect x="186" y="393.1" width="1" height="33.9" fill="#33FF00"/>
<rect x="190" y="393.1" width="1" height="33.9" fill="#33FF00"/>
<rect x="194" y="399.8" width="1" height="27.2" fill="#33FF00"/>
<rect x="199" y="406.5" width="1" height="20.5" fill="#33FF00"/>
<rect x="200" y="419.8" width="1" height="7.2" fill="#33FF00"/>
<rect x="201" y="419.8" width="1" height="7.2" fill="#33FF00"/>
<rect x="202" y="419.8" width="1" height="7.2" fill="#33FF00"/>
<rect x="203" y="419.8" width="1" height="7.2" fill="#33FF00"/>
<rect x="205" y="373.1" width="1" height="53.9" fill="#33FF00"/>
<rect x="208" y="413.1" width="1" height="13.8" fill="#33FF00"/>
<rect x="212" y="419.8" width="1" height="7.2" fill="#33FF00"/>
<rect x="218" y="419.8" width="1" height="7.2" fill="#33FF00"/>
<rect x="219" y="413.1" width="1" height="13.8" fill="#33FF00"/>
<rect x="220" y="419.8" width="1" height="7.2" fill="#33FF00"/>
<rect x="239" y="406.5" width="1" height="20.5" fill="#33FF00"/>
<rect x="240" y="419.8" width="1" height="7.2" fill="#33FF00"/>
<rect x="241" y="406.5" width="1" height="20.5" fill="#33FF00"/>
<rect x="242" y="419.8" width="1" height="7.2" fill="#33FF00"/>
<rect x="243" y="413.1" width="1" height="13.8" fill="#33FF00"/>
<rect x="245" y="419.8" width="1" height="7.2" fill="#33FF00"/>
<rect x="246" y="393.1" width="1" height="33.9" fill="#33FF00"/>
<rect x="248" y="406.5" width="1" height="20.5" fill="#33FF00"/>
<rect x="251" y="399.8" width="1" height="27.2" fill="#33FF00"/>
<rect x="252" y="419.8" width="1" height="7.2" fill="#33FF00"/>
<rect x="253" y="419.8" width="1" height="7.2" fill="#33FF00"/>
<rect x="254" y="413.1" width="1" height="13.8" fill="#33FF00"/>
<rect x="255" y="419.8" width="1" height="7.2" fill="#33FF00"/>
<rect x="256" y="419.8" width="1" height="7.2" fill="#33FF00"/>
<rect x="257" y="386.4" width="1" height="40.5" fill="#33FF00"/>
<rect x="258" y="386.4" width="1" height="40.5" fill="#33FF00"/>
<rect x="261" y="419.8" width="1" height="7.2" fill="#33FF00"/>
<rect x="262" y="419.8" width="1" height="7.2" fill="#33FF00"/>
<rect x="263" y="413.1" width="1" height="13.8" fill="#33FF00"/>
<rect x="267" y="419.8" width="1" height="7.2" fill="#33FF00"/>
<rect x="268" y="406.5" width="1" height="20.5" fill="#33FF00"/>
<rect x="269" y="413.1" width="1" height="13.8" fill="#33FF00"/>
<rect x="270" y="393.1" width="1" height="33.9" fill="#33FF00"/>
<rect x="271" y="419.8" width="1" height="7.2" fill="#33FF00"/>
<rect x="272" y="419.8" width="1" height="7.2" fill="#33FF00"/>
<rect x="273" y="406.5" width="1" height="20.5" fill="#33FF00"/>
<rect x="274" y="406.5" width="1" height="20.5" fill="#33FF00"/>
<rect x="277" y="413.1" width="1" height="13.8" fill="#33FF00"/>
<rect x="278" y="419.8" width="1" height="7.2" fill="#33FF00"/>
<rect x="279" y="406.5" width="1" height="20.5" fill="#33FF00"/>
<rect x="280" y="419.8" width="1" height="7.2" fill="#33FF00"/>
<rect x="281" y="419.8" width="1" height="7.2" fill="#33FF00"/>
<rect x="284" y="419.8" width="1" height="7.2" fill="#33FF00"/>
<rect x="287" y="419.8" width="1" height="7.2" fill="#33FF00"/>
<rect x="289" y="419.8" width="1" height="7.2" fill="#33FF00"/>
<rect x="290" y="419.8" width="1" height="7.2" fill="#33FF00"/>
<rect x="293" y="419.8" width="1" height="7.2" fill="#33FF00"/>
<rect x="297" y="413.1" width="1" height="13.8" fill="#33FF00"/>
<rect x="300" y="419.8" width="1" height="7.2" fill="#33FF00"/>
<rect x="301" y="419.8" width="1" height="7.2" fill="#33FF00"/>
<rect x="305" y="419.8" width="1" height="7.2" fill="#33FF00"/>
<rect x="306" y="419.8" width="1" height="7.2" fill="#33FF00"/>
<rect x="311" y="419.8" width="1" height="7.2" fill="#33FF00"/>
<rect x="313" y="406.5" width="1" height="20.5" fill="#33FF00"/>
<rect x="316" y="419.8" width="1" height="7.2" fill="#33FF00"/>
<rect x="319" y="419.8" width="1" height="7.2" fill="#33FF00"/>
<rect x="320" y="419.8" width="1" height="7.2" fill="#33FF00"/>
<rect x="321" y="413.1" width="1" height="13.8" fill="#33FF00"/>
<rect x="325" y="419.8" width="1" height="7.2" fill="#33FF00"/>
<rect x="326" y="419.8" width="1" height="7.2" fill="#33FF00"/>
<rect x="328" y="413.1" width="1" height="13.8" fill="#33FF00"/>
<rect x="329" y="419.8" width="1" height="7.2" fill="#33FF00"/>
<rect x="330" y="419.8" width="1" height="7.2" fill="#33FF00"/>
<rect x="332" y="413.1" width="1" height="13.8" fill="#33FF00"/>
<rect x="337" y="399.8" width="1" height="27.2" fill="#33FF00"/>
<rect x="338" y="419.8" width="1" height="7.2" fill="#33FF00"/>
<rect x="343" y="419.8" width="1" height="7.2" fill="#33FF00"/>
<rect x="344" y="419.8" width="1" height="7.2" fill="#33FF00"/>
<rect x="345" y="413.1" width="1" height="13.8" fill="#33FF00"/>
<rect x="346" y="419.8" width="1" height="7.2" fill="#33FF00"/>
<rect x="347" y="419.8" width="1" height="7.2" fill="#33FF00"/>
<rect x="349" y="413.1" width="1" height="13.8" fill="#33FF00"/>
<rect x="352" y="419.8" width="1" height="7.2" fill="#33FF00"/>
<rect x="355" y="413.1" width="1" height="13.8" fill="#33FF00"/>
<rect x="358" y="419.8" width="1" height="7.2" fill="#33FF00"/>
<rect x="361" y="386.4" width="1" height="40.5" fill="#33FF00"/>
<rect x="363" y="413.1" width="1" height="13.8" fill="#33FF00"/>
<rect x="364" y="393.1" width="1" height="33.9" fill="#33FF00"/>
<rect x="365" y="413.1" width="1" height="13.8" fill="#33FF00"/>
<rect x="366" y="413.1" width="1" height="13.8" fill="#33FF00"/>
<rect x="367" y="419.8" width="1" height="7.2" fill="#33FF00"/>
<rect x="369" y="386.4" width="1" height="40.5" fill="#33FF00"/>
<rect x="373" y="406.5" width="1" height="20.5" fill="#33FF00"/>
<rect x="374" y="419.8" width="1" height="7.2" fill="#33FF00"/>
<rect x="376" y="419.8" width="1" height="7.2" fill="#33FF00"/>
<rect x="377" y="419.8" width="1" height="7.2" fill="#33FF00"/>
<rect x="378" y="393.1" width="1" height="33.9" fill="#33FF00"/>
<rect x="379" y="419.8" width="1" height="7.2" fill="#33FF00"/>
<rect x="380" y="419.8" width="1" height="7.2" fill="#33FF00"/>
<rect x="381" y="406.5" width="1" height="20.5" fill="#33FF00"/>
<rect x="383" y="419.8" width="1" height="7.2" fill="#33FF00"/>
<rect x="389" y="419.8" width="1" height="7.2" fill="#33FF00"/>
<rect x="390" y="419.8" width="1" height="7.2" fill="#33FF00"/>
<rect x="392" y="393.1" width="1" height="33.9" fill="#33FF00"/>
<rect x="395" y="419.8" width="1" height="7.2" fill="#33FF00"/>
<rect x="396" y="419.8" width="1" height="7.2" fill="#33FF00"/>
<rect x="400" y="399.8" width="1" height="27.2" fill="#33FF00"/>
<rect x="403" y="419.8" width="1" height="7.2" fill="#33FF00"/>
<rect x="404" y="419.8" width="1" height="7.2" fill="#33FF00"/>
<rect x="408" y="419.8" width="1" height="7.2" fill="#33FF00"/>
<rect x="409" y="419.8" width="1" height="7.2" fill="#33FF00"/>
<rect x="410" y="419.8" width="1" height="7.2" fill="#33FF00"/>
<rect x="411" y="413.1" width="1" height="13.8" fill="#33FF00"/>
<rect x="414" y="386.4" width="1" height="40.5" fill="#33FF00"/>
<rect x="415" y="406.5" width="1" height="20.5" fill="#33FF00"/>
<rect x="417" y="419.8" width="1" height="7.2" fill="#33FF00"/>
<rect x="420" y="413.1" width="1" height="13.8" fill="#33FF00"/>
<rect x="424" y="399.8" width="1" height="27.2" fill="#33FF00"/>
<rect x="425" y="419.8" width="1" height="7.2" fill="#33FF00"/>
<rect x="426" y="419.8" width="1" height="7.2" fill="#33FF00"/>
<rect x="427" y="399.8" width="1" height="27.2" fill="#33FF00"/>
<rect x="428" y="419.8" width="1" height="7.2" fill="#33FF00"/>
<rect x="429" y="419.8" width="1" height="7.2" fill="#33FF00"/>
<rect x="430" y="419.8" width="1" height="7.2" fill="#33FF00"/>
<rect x="432" y="419.8" width="1" height="7.2" fill="#33FF00"/>
<rect x="433" y="399.8" width="1" height="27.2" fill="#33FF00"/>
<rect x="434" y="386.4" width="1" height="40.5" fill="#33FF00"/>
<rect x="435" y="419.8" width="1" height="7.2" fill="#33FF00"/>
<rect x="437" y="399.8" width="1" height="27.2" fill="#33FF00"/>
<rect x="438" y="419.8" width="1" height="7.2" fill="#33FF00"/>
<rect x="439" y="419.8" width="1" height="7.2" fill="#33FF00"/>
<rect x="440" y="419.8" width="1" height="7.2" fill="#33FF00"/>
<rect x="441" y="419.8" width="1" height="7.2" fill="#33FF00"/>
<rect x="442" y="399.8" width="1" height="27.2" fill="#33FF00"/>
<rect x="443" y="419.8" width="1" height="7.2" fill="#33FF00"/>
<rect x="444" y="419.8" width="1" height="7.2" fill="#33FF00"/>
<rect x="445" y="419.8" width="1" height="7.2" fill="#33FF00"/>
<rect x="446" y="419.8" width="1" height="7.2" fill="#33FF00"/>
<rect x="447" y="419.8" width="1" height="7.2" fill="#33FF00"/>
<rect x="449" y="393.1" width="1" height="33.9" fill="#33FF00"/>
<rect x="451" y="419.8" width="1" height="7.2" fill="#33FF00"/>
<rect x="452" y="419.8" width="1" height="7.2" fill="#33FF00"/>
<rect x="453" y="419.8" width="1" height="7.2" fill="#33FF00"/>
<rect x="454" y="419.8" width="1" height="7.2" fill="#33FF00"/>
<rect x="455" y="386.4" width="1" height="40.5" fill="#33FF00"/>
<rect x="456" y="386.4" width="1" height="40.5" fill="#33FF00"/>
<rect x="443" y="362.5" width="2" height="64.5" fill="#80F808"/>
<rect x="453" y="353" width="1.5" height="74" fill="#80F808"/>
<path d="M48 368h1v3h-1zM49 366h1v5h-1zM50 366h1v7h-1zM51 365h1v8h-1zM52 365h1v6h-1zM53 366h1v5h-1zM54 366h1v4h-1zM55 365h1v5h-1zM56 365h1v5h-1zM57 365h1v5h-1zM58 363h1v5h-1zM59 363h1v6h-1zM60 366h1v3h-1zM61 366h1v4h-1zM62 365h1v5h-1zM63 365h1v3h-1zM64 365h1v8h-1zM65 366h1v7h-1zM66 364h1v5h-1zM67 364h1v6h-1zM68 365h1v5h-1zM69 365h1v3h-1zM70 364h1v4h-1zM71 364h1v4h-1zM72 365h1v4h-1zM73 366h1v6h-1zM74 364h1v8h-1zM75 364h1v3h-1zM76 364h1v4h-1zM77 365h1v3h-1zM78 363h1v5h-1zM79 363h1v6h-1zM80 365h1v4h-1zM81 365h1v3h-1zM82 364h1v4h-1zM83 364h1v4h-1zM84 364h1v4h-1zM85 364h1v3h-1zM86 364h1v3h-1zM87 364h1v5h-1zM88 365h1v4h-1zM89 365h1v3h-1zM90 365h1v3h-1zM91 365h1v4h-1zM92 365h1v4h-1zM93 365h1v4h-1zM94 363h1v6h-1zM95 363h1v6h-1zM96 362h1v7h-1zM97 362h1v7h-1zM98 364h1v5h-1zM99 364h1v4h-1zM100 363h1v5h-1zM101 363h1v5h-1zM102 365h1v4h-1zM103 363h1v6h-1zM104 363h1v5h-1zM105 365h1v3h-1zM106 363h1v5h-1zM107 363h1v5h-1zM108 361h1v7h-1zM109 361h1v6h-1zM110 364h1v6h-1zM111 365h1v5h-1zM112 362h1v6h-1zM113 362h1v5h-1zM114 364h1v5h-1zM115 365h1v4h-1zM116 365h1v3h-1zM117 365h1v3h-1zM118 365h1v4h-1zM119 366h1v3h-1zM120 363h1v6h-1zM121 363h1v6h-1zM122 366h1v3h-1zM123 366h1v7h-1zM124 366h1v7h-1zM125 366h1v4h-1zM126 367h1v3h-1zM127 367h1v4h-1zM128 368h1v3h-1zM129 368h1v6h-1zM130 369h1v5h-1zM131 369h1v3h-1zM132 369h1v3h-1zM133 368h1v4h-1zM134 368h1v5h-1zM135 369h1v4h-1zM136 369h1v4h-1zM137 370h1v4h-1zM138 369h1v5h-1zM139 369h1v4h-1zM140 369h1v4h-1zM141 368h1v4h-1zM142 368h1v4h-1zM143 369h1v4h-1zM144 370h1v3h-1zM145 368h1v5h-1zM146 368h1v4h-1zM147 368h1v4h-1zM148 366h1v5h-1zM149 366h1v7h-1zM150 369h1v4h-1zM151 369h1v3h-1zM152 369h1v4h-1zM153 370h1v3h-1zM154 370h1v4h-1zM155 371h1v3h-1zM156 368h1v6h-1zM157 368h1v4h-1zM158 369h1v3h-1zM159 369h1v4h-1zM160 365h1v8h-1zM161 365h1v5h-1zM162 367h1v5h-1zM163 368h1v4h-1zM164 367h1v4h-1zM165 367h1v7h-1zM166 369h1v5h-1zM167 366h1v6h-1zM168 366h1v5h-1zM169 368h1v3h-1zM170 366h1v5h-1zM171 366h1v5h-1zM172 368h1v3h-1zM173 368h1v3h-1zM174 368h1v3h-1zM175 368h1v3h-1zM176 368h1v3h-1zM177 368h1v4h-1zM178 367h1v5h-1zM179 366h1v4h-1zM180 366h1v7h-1zM181 369h1v4h-1zM182 366h1v6h-1zM183 366h1v5h-1zM184 368h1v3h-1zM185 368h1v5h-1zM186 368h1v5h-1zM187 365h1v6h-1zM188 365h1v7h-1zM189 369h1v5h-1zM190 368h1v6h-1zM191 367h1v4h-1zM192 367h1v3h-1zM193 367h1v4h-1zM194 368h1v3h-1zM195 368h1v3h-1zM196 368h1v5h-1zM197 367h1v6h-1zM198 367h1v3h-1zM199 367h1v4h-1zM200 367h1v4h-1zM201 367h1v4h-1zM202 367h1v4h-1zM203 365h1v5h-1zM204 365h1v4h-1zM205 366h1v4h-1zM206 367h1v3h-1zM207 367h1v4h-1zM208 366h1v5h-1zM209 366h1v3h-1zM210 365h1v4h-1zM211 365h1v6h-1zM212 367h1v4h-1zM213 367h1v3h-1zM214 365h1v5h-1zM215 365h1v5h-1zM216 367h1v5h-1zM217 367h1v5h-1zM218 367h1v3h-1zM219 367h1v3h-1zM220 367h1v3h-1zM221 367h1v3h-1zM222 367h1v3h-1zM223 367h1v4h-1zM224 366h1v5h-1zM225 364h1v5h-1zM226 364h1v7h-1zM227 366h1v5h-1zM228 366h1v4h-1zM229 366h1v4h-1zM230 366h1v4h-1zM231 366h1v4h-1zM232 366h1v3h-1zM233 366h1v3h-1zM234 365h1v4h-1zM235 364h1v4h-1zM236 364h1v7h-1zM237 366h1v5h-1zM238 364h1v5h-1zM239 364h1v6h-1zM240 367h1v3h-1zM241 365h1v5h-1zM242 365h1v3h-1zM243 365h1v3h-1zM244 365h1v5h-1zM245 363h1v7h-1zM246 363h1v6h-1zM247 364h1v5h-1zM248 364h1v4h-1zM249 365h1v5h-1zM250 367h1v3h-1zM251 338h1v30h-1zM252 338h1v4h-1zM253 339h1v3h-1zM254 338h1v4h-1zM255 338h1v4h-1zM256 339h1v3h-1zM257 339h1v4h-1zM258 340h1v5h-1zM259 342h1v3h-1zM260 342h1v4h-1zM261 343h1v5h-1zM262 344h1v4h-1zM263 343h1v4h-1zM264 343h1v7h-1zM265 343h1v7h-1zM266 343h1v6h-1zM267 346h1v4h-1zM268 347h1v3h-1zM269 347h1v3h-1zM270 347h1v4h-1zM271 347h1v4h-1zM272 346h1v4h-1zM273 346h1v4h-1zM274 347h1v5h-1zM275 348h1v4h-1zM276 348h1v4h-1zM277 349h1v7h-1zM278 349h1v7h-1zM279 348h1v4h-1zM280 348h1v4h-1zM281 349h1v5h-1zM282 349h1v5h-1zM283 349h1v3h-1zM284 349h1v3h-1zM285 349h1v6h-1zM286 349h1v6h-1zM287 349h1v5h-1zM288 351h1v4h-1zM289 351h1v4h-1zM290 350h1v4h-1zM291 350h1v3h-1zM292 350h1v4h-1zM293 351h1v3h-1zM294 351h1v3h-1zM295 351h1v8h-1zM296 351h1v8h-1zM297 351h1v5h-1zM298 351h1v5h-1zM299 351h1v5h-1zM300 352h1v4h-1zM301 352h1v5h-1zM302 353h1v4h-1zM303 352h1v4h-1zM304 352h1v4h-1zM305 352h1v4h-1zM306 352h1v5h-1zM307 352h1v5h-1zM308 352h1v5h-1zM309 353h1v4h-1zM310 352h1v4h-1zM311 351h1v4h-1zM312 351h1v4h-1zM313 352h1v5h-1zM314 350h1v7h-1zM315 350h1v5h-1zM316 352h1v5h-1zM317 352h1v5h-1zM318 352h1v6h-1zM319 354h1v4h-1zM320 353h1v4h-1zM321 353h1v4h-1zM322 353h1v4h-1zM323 353h1v3h-1zM324 353h1v6h-1zM325 352h1v7h-1zM326 352h1v6h-1zM327 349h1v9h-1zM328 349h1v8h-1zM329 353h1v4h-1zM330 352h1v4h-1zM331 352h1v5h-1zM332 354h1v3h-1zM333 352h1v5h-1zM334 352h1v5h-1zM335 353h1v4h-1zM336 353h1v3h-1zM337 353h1v6h-1zM338 352h1v7h-1zM339 352h1v4h-1zM340 352h1v4h-1zM341 352h1v7h-1zM342 355h1v4h-1zM343 354h1v4h-1zM344 354h1v3h-1zM345 354h1v4h-1zM346 353h1v5h-1zM347 353h1v5h-1zM348 354h1v4h-1zM349 354h1v5h-1zM350 356h1v3h-1zM351 356h1v3h-1zM352 353h1v6h-1zM353 353h1v4h-1zM354 354h1v4h-1zM355 355h1v4h-1zM356 355h1v4h-1zM357 355h1v4h-1zM358 354h1v5h-1zM359 354h1v4h-1zM360 351h1v7h-1zM361 351h1v6h-1zM362 354h1v4h-1zM363 352h1v6h-1zM364 352h1v6h-1zM365 353h1v5h-1zM366 353h1v6h-1zM367 354h1v5h-1zM368 354h1v3h-1zM369 354h1v3h-1zM370 354h1v5h-1zM371 356h1v3h-1zM372 354h1v5h-1zM373 354h1v3h-1zM374 354h1v4h-1zM375 354h1v4h-1zM376 354h1v3h-1zM377 354h1v6h-1zM378 354h1v6h-1zM379 354h1v4h-1zM380 355h1v3h-1zM381 355h1v3h-1zM382 355h1v5h-1zM383 354h1v6h-1zM384 354h1v5h-1zM385 356h1v4h-1zM386 352h1v8h-1zM387 352h1v7h-1zM388 356h1v6h-1zM389 354h1v8h-1zM390 354h1v5h-1zM391 354h1v5h-1zM392 354h1v6h-1zM393 357h1v3h-1zM394 355h1v5h-1zM395 355h1v3h-1zM396 355h1v8h-1zM397 356h1v7h-1zM398 355h1v4h-1zM399 355h1v4h-1zM400 355h1v4h-1zM401 355h1v6h-1zM402 354h1v7h-1zM403 354h1v5h-1zM404 355h1v4h-1zM405 355h1v4h-1zM406 352h1v7h-1zM407 352h1v5h-1zM408 354h1v7h-1zM409 356h1v5h-1zM410 356h1v4h-1zM411 356h1v4h-1zM412 356h1v3h-1zM413 355h1v4h-1zM414 355h1v4h-1zM415 353h1v6h-1zM416 353h1v6h-1zM417 356h1v4h-1zM418 357h1v4h-1zM419 358h1v3h-1zM420 356h1v5h-1zM421 356h1v4h-1zM422 357h1v4h-1zM423 358h1v4h-1zM424 359h1v4h-1zM425 360h1v3h-1zM426 359h1v4h-1zM427 359h1v4h-1zM428 360h1v3h-1zM429 359h1v4h-1zM430 358h1v4h-1zM431 358h1v4h-1zM432 357h1v5h-1zM433 357h1v5h-1zM434 359h1v5h-1zM435 355h1v9h-1zM436 355h1v8h-1zM437 360h1v3h-1zM438 360h1v3h-1zM439 360h1v3h-1zM440 358h1v5h-1zM441 358h1v5h-1zM442 356h1v7h-1zM443 356h1v6h-1zM444 359h1v3h-1zM445 359h1v3h-1zM446 359h1v3h-1zM447 358h1v4h-1zM448 358h1v5h-1zM449 360h1v3h-1zM450 360h1v3h-1zM451 360h1v4h-1zM452 359h1v5h-1zM453 357h1v5h-1zM454 357h1v9h-1z" fill="#FF00FF"/></svg>
<div class="a r s" style="left:10px;width:31.2px;top:122.5px;letter-spacing:-0.24px">100</div>
<div class="a r s" style="left:10px;width:31.2px;top:149.5px;letter-spacing:-0.24px">80</div>
<div class="a r s" style="left:10px;width:31.2px;top:176.5px;letter-spacing:-0.24px">60</div>
<div class="a r s" style="left:10px;width:31.2px;top:202.5px;letter-spacing:-0.24px">40</div>
<div class="a r s" style="left:10px;width:31.2px;top:229.5px;letter-spacing:-0.24px">20</div>
<div class="a r s" style="left:10px;width:31.2px;top:284.5px;letter-spacing:-0.24px">20</div>
<div class="a s" style="left:470.6px;top:284.5px">20</div>
<div class="a s" style="left:470.6px;top:136.0px">20</div>
<div class="a r s" style="left:10px;width:31.2px;top:311.5px;letter-spacing:-0.24px">16</div>
<div class="a s" style="left:470.6px;top:311.5px">16</div>
<div class="a s" style="left:470.6px;top:160.0px">16</div>
<div class="a r s" style="left:10px;width:31.2px;top:338.5px;letter-spacing:-0.24px">12</div>
<div class="a s" style="left:470.6px;top:338.5px">12</div>
<div class="a s" style="left:470.6px;top:184.0px">12</div>
<div class="a r s" style="left:10px;width:31.2px;top:364.5px;letter-spacing:-0.24px">8</div>
<div class="a s" style="left:470.6px;top:364.5px">8</div>
<div class="a s" style="left:470.6px;top:208.0px">8</div>
<div class="a r s" style="left:10px;width:31.2px;top:391.5px;letter-spacing:-0.24px">4</div>
<div class="a s" style="left:470.6px;top:391.5px">4</div>
<div class="a s" style="left:470.6px;top:232.0px">4</div>
<div class="a s c" style="left:39.7px;width:20px;text-align:center;top:267px">0.0</div>
<div class="a s c" style="left:39.7px;width:20px;text-align:center;top:429px">0.0</div>
<div class="a s c" style="left:92.0px;width:20px;text-align:center;top:267px">1.0</div>
<div class="a s c" style="left:92.0px;width:20px;text-align:center;top:429px">1.0</div>
<div class="a s c" style="left:144.2px;width:20px;text-align:center;top:267px">2.0</div>
<div class="a s c" style="left:144.2px;width:20px;text-align:center;top:429px">2.0</div>
<div class="a s c" style="left:196.4px;width:20px;text-align:center;top:267px">3.0</div>
<div class="a s c" style="left:196.4px;width:20px;text-align:center;top:429px">3.0</div>
<div class="a s c" style="left:248.7px;width:20px;text-align:center;top:267px">4.0</div>
<div class="a s c" style="left:248.7px;width:20px;text-align:center;top:429px">4.0</div>
<div class="a s c" style="left:300.9px;width:20px;text-align:center;top:267px">5.0</div>
<div class="a s c" style="left:300.9px;width:20px;text-align:center;top:429px">5.0</div>
<div class="a s c" style="left:353.2px;width:20px;text-align:center;top:267px">6.0</div>
<div class="a s c" style="left:353.2px;width:20px;text-align:center;top:429px">6.0</div>
<div class="a s c" style="left:405.4px;width:20px;text-align:center;top:267px">7.0</div>
<div class="a s c" style="left:405.4px;width:20px;text-align:center;top:429px">7.0</div>
<div class="a s c" style="left:457.7px;width:20px;text-align:center;top:267px">8.0</div>
<div class="a s c" style="left:457.7px;width:20px;text-align:center;top:429px">8.0</div>
<div class="grp" style="left:491px;top:125px;width:139px;height:82px"></div>
<div class="gl s" style="left:498px;top:118.7px;letter-spacing:0.27px">Disc info</div>
<div class="a s" style="left:500px;top:132.6px">Type:</div>
<div class="a v s" style="left:545.5px;top:132.6px">DVD+R DL</div>
<div class="a s" style="left:500px;top:150.3px">ID:</div>
<div class="a v s" style="left:545.5px;top:150.3px">MKM 001</div>
<div class="a s" style="left:500px;top:168.0px">Date:</div>
<div class="a v s" style="left:545.5px;top:168.0px">26 Mar 2007</div>
<div class="a s" style="left:500px;top:185.7px">Label:</div>
<div class="a v s" style="left:545.5px;top:185.7px">New</div>
<div class="grp" style="left:491px;top:216px;width:139px;height:203px"></div>
<div class="gl s" style="left:498px;top:209.7px;letter-spacing:0.27px">Settings</div>
<div class="sunk" style="left:500px;top:225px;width:84px;height:21px;"></div>
<div class="a s" style="left:504px;top:228.7px;">8 X</div>
<div class="btn" style="left:566px;top:227px;width:16px;height:17px;"><svg style="position:absolute;left:3px;top:5px" width="7" height="4"><path d="M0 0h7l-3.5 4z" fill="#000"/></svg></div>
<div class="btn" style="left:592px;top:224px;width:23px;height:23px;"><div style="position:absolute;left:3px;top:2px;width:15px;height:16px;box-sizing:border-box;border:1px solid #000;background:#F0FFF0"></div>
<svg style="position:absolute;left:3px;top:2px" width="15" height="16" viewBox="0 0 15 16"><path d="M4 8.2V4.5h3.5" fill="none" stroke="#008000" stroke-width="1.2"/><path d="M7 2l3 2.5-3 2.5z" fill="#008000"/><path d="M11 7.8v3.7h-3.5" fill="none" stroke="#008000" stroke-width="1.2"/><path d="M8 9l-3 2.5 3 2.5z" fill="#008000"/></svg></div>
<div class="a s" style="left:502px;top:256px">Start:</div>
<div class="sunk" style="left:554px;top:251px;width:60px;height:20px;"></div>
<div class="a s" style="left:557.5px;top:253.8px">0000 MB</div>
<div class="a s" style="left:502px;top:279px">End:</div>
<div class="sunk" style="left:554px;top:274px;width:60px;height:20px;"></div>
<div class="a s" style="left:557.5px;top:276.6px">8000 MB</div>
<div class="cb" style="left:502px;top:296px;background:#fff"></div>
<div class="a s" style="left:520.5px;top:296px">Quick scan</div>
<div class="cb" style="left:502px;top:314px;background:#fff"><svg style="position:absolute;left:2px;top:2px" width="7" height="7" viewBox="0 0 7 7"><path d="M0 2v3l2 2 5-5v-3l-5 5z" fill="#000"/></svg></div>
<div class="a s" style="left:520.5px;top:314px">Show C1/PIE</div>
<div class="cb" style="left:502px;top:329px;background:#fff"><svg style="position:absolute;left:2px;top:2px" width="7" height="7" viewBox="0 0 7 7"><path d="M0 2v3l2 2 5-5v-3l-5 5z" fill="#000"/></svg></div>
<div class="a s" style="left:520.5px;top:329.4px">Show C2/PIF</div>
<div class="cb" style="left:502px;top:345px;background:#fff"><svg style="position:absolute;left:2px;top:2px" width="7" height="7" viewBox="0 0 7 7"><path d="M0 2v3l2 2 5-5v-3l-5 5z" fill="#000"/></svg></div>
<div class="a s" style="left:520.5px;top:345.4px">Show jitter</div>
<div class="cb" style="left:502px;top:361px;background:#fff"><svg style="position:absolute;left:2px;top:2px" width="7" height="7" viewBox="0 0 7 7"><path d="M0 2v3l2 2 5-5v-3l-5 5z" fill="#000"/></svg></div>
<div class="a s" style="left:520.5px;top:361px">Show read speed</div>
<div class="cb" style="left:502px;top:377px;background:#D4D0C8"><svg style="position:absolute;left:2px;top:2px" width="7" height="7" viewBox="0 0 7 7"><path d="M0 2v3l2 2 5-5v-3l-5 5z" fill="#808080"/></svg></div>
<div class="a s" style="left:521.5px;top:377.3px;color:#fff">Show write speed</div>
<div class="a s" style="left:520.5px;top:376.3px;color:#808080">Show write speed</div>
<div class="btn" style="left:550px;top:393px;width:75px;height:23px;"></div>
<div class="a s c" style="left:550px;top:397px;width:75px;text-align:center;letter-spacing:0.32px">Advanced</div>
<div class="grp" style="left:491px;top:425px;width:139px;height:26px"></div>
<div class="a s" style="left:502px;top:431.7px">Quality score:</div>
<div class="a v r s" style="left:559.5px;width:61px;top:431.7px">94</div>
<div class="grp" style="left:491px;top:457px;width:139px;height:55px"></div>
<svg class="a" style="left:579px;top:466px" width="42" height="42" viewBox="0 0 42 42">
<defs><linearGradient id="dg" x1="0" y1="0" x2="1" y2="1"><stop offset="0" stop-color="#D2D2D2"/><stop offset="0.35" stop-color="#BCBCBE"/><stop offset="0.65" stop-color="#C8C8CA"/><stop offset="1" stop-color="#B4B4B8"/></linearGradient></defs>
<circle cx="20.6" cy="20.4" r="18.8" fill="url(#dg)" stroke="#B8B8BA" stroke-width="1"/>
<path d="M20.6 20.4 L4 12 A18.8 18.8 0 0 1 12 4 Z" fill="#DCDCDC" opacity="0.7"/>
<path d="M20.6 20.4 L37 29 A18.8 18.8 0 0 1 29 37 Z" fill="#D4D4D4" opacity="0.6"/>
<circle cx="20.6" cy="20.4" r="6.2" fill="#D2D0CC" stroke="#BEBEC0" stroke-width="0.8"/>
<circle cx="20.6" cy="20.4" r="2.4" fill="#DAD7D0"/>
</svg>
<div class="a s" style="left:502px;top:466.2px">Progress:</div>
<div class="a v r s" style="left:560px;width:61px;top:466.2px;letter-spacing:-0.19px">100 %</div>
<div class="a s" style="left:502px;top:481.8px">Position:</div>
<div class="a v r s" style="left:560px;width:61px;top:481.8px;letter-spacing:-0.19px">7999 MB</div>
<div class="a s" style="left:502px;top:496.9px">Speed:</div>
<div class="a v r s" style="left:560px;width:61px;top:496.9px;letter-spacing:-0.19px">3.34 X</div>
<div class="grp" style="left:14px;top:457px;width:146px;height:56px"></div>
<div class="gl s" style="left:22px;top:449.6px;padding-left:14.7px;letter-spacing:-0.13px">PI Errors</div>
<div class="sw" style="left:24px;top:454px;background:#00FFFF"></div>
<div class="a s" style="left:22px;top:466.8px;letter-spacing:-0.02px">Average:</div>
<div class="a v r s" style="left:90px;width:61px;top:466.8px;letter-spacing:0.27px">16.09</div>
<div class="a s" style="left:22px;top:481.7px;letter-spacing:-0.35px">Maximum:</div>
<div class="a v r s" style="left:90px;width:61px;top:481.7px;letter-spacing:0.27px">98</div>
<div class="a s" style="left:22.8px;top:496.6px;letter-spacing:0.15px">Total:</div>
<div class="a v r s" style="left:90px;width:61px;top:496.6px;letter-spacing:0.27px">514757</div>
<div class="grp" style="left:172px;top:457px;width:146px;height:56px"></div>
<div class="gl s" style="left:180px;top:449.6px;padding-left:14.7px;letter-spacing:-0.13px">PI Failures</div>
<div class="sw" style="left:182px;top:454px;background:#FFFF00"></div>
<div class="a s" style="left:180px;top:466.8px;letter-spacing:-0.02px">Average:</div>
<div class="a v r s" style="left:248px;width:61px;top:466.8px;letter-spacing:0.27px">0.01</div>
<div class="a s" style="left:180px;top:481.7px;letter-spacing:-0.35px">Maximum:</div>
<div class="a v r s" style="left:248px;width:61px;top:481.7px;letter-spacing:0.27px">11</div>
<div class="a s" style="left:180.8px;top:496.6px;letter-spacing:0.15px">Total:</div>
<div class="a v r s" style="left:248px;width:61px;top:496.6px;letter-spacing:0.27px">2878</div>
<div class="grp" style="left:331px;top:457px;width:147px;height:43px"></div>
<div class="gl s" style="left:339px;top:449.6px;padding-left:14.7px;letter-spacing:-0.13px">Jitter</div>
<div class="sw" style="left:341px;top:454px;background:#FF00FF"></div>
<div class="a s" style="left:339px;top:466.8px;letter-spacing:-0.02px">Average:</div>
<div class="a v r s" style="left:406.5px;width:61px;top:466.8px;letter-spacing:-0.13px">9.54 %</div>
<div class="a s" style="left:339px;top:481.7px;letter-spacing:-0.35px">Maximum:</div>
<div class="a v r s" style="left:406.5px;width:61px;top:481.7px;letter-spacing:-0.13px">13.3 %</div>
<div class="a s" style="left:340px;top:500px">PO failures:</div>
<div class="a v r s" style="left:407px;width:61px;top:500px">0</div>
<div class="a" style="left:560px;top:503px;font-size:19.5px;font-weight:bold;color:rgba(255,255,255,0.42);letter-spacing:0px;line-height:20px;transform-origin:0 0;transform:scaleX(0.585)">CDRLABS.COM</div></body></html>
